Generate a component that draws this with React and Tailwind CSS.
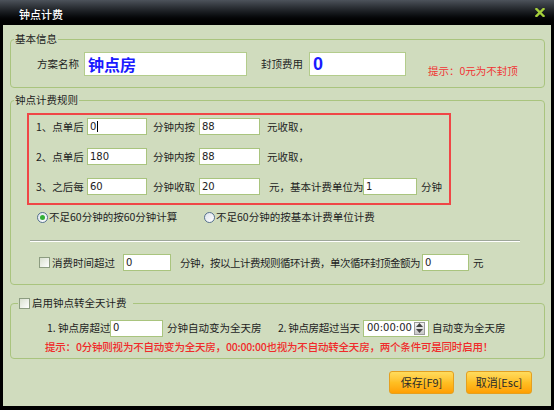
import React from "react";

function Field({ w, value, cursor = false }) {
  return (
    <div
      className={`${w} h-[17px] shrink-0 bg-white border border-[#a9c47e] flex items-center pl-[2px] text-[10px] text-[#222] font-['DejaVu_Sans',sans-serif]`}
    >
      {value}
      {cursor && <span className="ml-[1px] w-px h-[11px] bg-black" />}
    </div>
  );
}

function Check() {
  return (
    <span className="w-[11px] h-[11px] shrink-0 border border-[#8c9c80] bg-linear-to-br from-[#d8e0cf] to-white" />
  );
}

function Radio({ checked }) {
  return (
    <span className="w-[11px] h-[11px] shrink-0 rounded-full border border-[#56718f] bg-linear-to-br from-[#dde4ec] to-white flex items-center justify-center">
      {checked && <span className="w-[5px] h-[5px] rounded-full bg-[#33b036]" />}
    </span>
  );
}

function Button({ w, children }) {
  return (
    <button
      className={`${w} h-[23px] rounded-[3px] border border-[#e4a020] bg-linear-to-b from-[#ffdc5c] via-[#ffbf22] to-[#ff9f00] text-[11px] text-[#2a2a2a] flex items-center justify-center`}
    >
      {children}
    </button>
  );
}

export default function App() {
  return (
    <div className="w-[554px] h-[410px] bg-black flex flex-col font-['Noto_Sans_CJK_SC',sans-serif] text-[10.5px] leading-[14px] text-[#1e1e1e]">
      {/* title bar */}
      <div className="h-[25px] shrink-0 bg-linear-to-b from-[#4d535b] via-[#171a1e] to-black flex items-center justify-between pl-[19px] pr-[9px] pt-[3px]">
        <span className="text-white text-[11px] font-medium">钟点计费</span>
        <svg width="10" height="9" viewBox="0 0 10 9" className="mt-[-3px]">
          <path d="M1.5 1 L8.5 8 M8.5 1 L1.5 8" stroke="#a6d03c" strokeWidth="2.4" strokeLinecap="square" />
        </svg>
      </div>

      <div className="mx-[3px] mb-[4px] flex-1 bg-[#d0dcbe] pl-[7px] pr-[6px] pt-[7px] flex flex-col">
        {/* 基本信息 */}
        <fieldset className="border border-[#a9c47e] rounded-[4px]">
          <legend className="ml-[3px] px-[1px] leading-[14px]">基本信息</legend>
          <div className="flex items-end pl-[26px] pt-[6px] pb-[11px]">
            <div className="flex items-center h-[24px]">
              <span className="w-[47px]">方案名称</span>
              <div className="w-[163px] h-[24px] bg-white border border-[#b3cc8c] flex items-center pl-[3px] text-[16px] font-bold text-[#1a1aff]">
                钟点房
              </div>
              <span className="w-[62px] pl-[14px]">封顶费用</span>
              <div className="w-[97px] h-[24px] bg-white border border-[#b3cc8c] flex items-center pl-[3px] text-[18px] font-bold text-[#1a1aff] font-['Liberation_Sans',sans-serif]">
                0
              </div>
            </div>
            <span className="ml-[22px] mb-[-2px] text-[#f03434]">提示：0元为不封顶</span>
          </div>
        </fieldset>

        {/* 钟点计费规则 */}
        <fieldset className="mt-[5px] border border-[#a9c47e] rounded-[4px] pb-[13px]">
          <legend className="ml-[3px] px-[1px] leading-[14px]">钟点计费规则</legend>
          <div className="ml-[16px] mt-[6px] w-[424px] border-2 border-[#f04646] pt-[3px] pb-[8px] flex flex-col gap-[13px]">
            <div className="flex items-center h-[17px] pl-[7px]">
              <span className="w-[51px]">1、点单后</span>
              <Field w="w-[60px]" value="0" cursor />
              <span className="w-[52px] pl-[6px]">分钟内按</span>
              <Field w="w-[61px]" value="88" />
              <span className="pl-[7px]">元收取，</span>
            </div>
            <div className="flex items-center h-[17px] pl-[7px]">
              <span className="w-[51px]">2、点单后</span>
              <Field w="w-[60px]" value="180" />
              <span className="w-[52px] pl-[6px]">分钟内按</span>
              <Field w="w-[61px]" value="88" />
              <span className="pl-[7px]">元收取，</span>
            </div>
            <div className="flex items-center h-[17px] pl-[7px]">
              <span className="w-[51px]">3、之后每</span>
              <Field w="w-[60px]" value="60" />
              <span className="w-[52px] pl-[6px]">分钟收取</span>
              <Field w="w-[61px]" value="20" />
              <span className="w-[103px] pl-[9px] whitespace-nowrap">元，基本计费单位为</span>
              <Field w="w-[54px]" value="1" />
              <span className="pl-[4px]">分钟</span>
            </div>
          </div>

          <div className="flex items-center h-[14px] mt-[5px] pl-[26px]">
            <Radio checked />
            <span className="w-[156px] pl-[1px] whitespace-nowrap">不足60分钟的按60分钟计算</span>
            <Radio />
            <span className="pl-[1px] whitespace-nowrap">不足60分钟的按基本计费单位计费</span>
          </div>

          <div className="ml-[19px] mt-[16px] w-[490px] h-[2px] border-t border-t-[#9ea79a] border-b border-b-white" />

          <div className="flex items-center h-[17px] mt-[12px] pl-[28px]">
            <Check />
            <span className="w-[73px] pl-[2px] whitespace-nowrap">消费时间超过</span>
            <Field w="w-[48px]" value="0" />
            <span className="pl-[9px] pr-[2px] whitespace-nowrap tracking-[-0.5px]">分钟，按以上计费规则循环计费，单次循环封顶金额为</span>
            <Field w="w-[47px]" value="0" />
            <span className="pl-[4px]">元</span>
          </div>
        </fieldset>

        {/* 启用钟点转全天计费 */}
        <fieldset className="mt-[11px] border border-[#a9c47e] rounded-[4px] pb-[4px]">
          <legend className="ml-[7px] pl-[1px] pr-[6px] leading-[14px]">
            <span className="inline-flex items-center">
              <Check />
              <span className="pl-[2px]">启用钟点转全天计费</span>
            </span>
          </legend>
          <div className="flex items-center h-[17px] mt-[8px] pl-[36px]">
            <span className="w-[63px] whitespace-nowrap">1. 钟点房超过</span>
            <Field w="w-[53px]" value="0" />
            <span className="w-[115px] pl-[4px] whitespace-nowrap">分钟自动变为全天房</span>
            <span className="w-[85px] whitespace-nowrap tracking-[-0.3px]">2. 钟点房超过当天</span>
            <div className="w-[66px] h-[17px] shrink-0 bg-white border border-[#a9c47e] flex items-center justify-between pl-[3px] pr-[3px] text-[10px] text-[#222] font-['DejaVu_Sans',sans-serif]">
              <span>00:00:00</span>
              <span className="w-[11px] h-[13px] border border-[#9a9a9a] bg-linear-to-b from-[#f2f2f2] to-[#c8c8c8] flex flex-col items-center justify-center gap-[2px]">
                <svg width="7" height="4" viewBox="0 0 7 4"><path d="M0 4 L3.5 0 L7 4 Z" fill="#444" /></svg>
                <svg width="7" height="4" viewBox="0 0 7 4"><path d="M0 0 L3.5 4 L7 0 Z" fill="#444" /></svg>
              </span>
            </div>
            <span className="pl-[3px] whitespace-nowrap">自动变为全天房</span>
          </div>
          <div className="mt-[3px] pl-[34px] leading-[14px] text-[#f02a2a] font-medium whitespace-nowrap tracking-[-0.2px]">
            提示：0分钟则视为不自动变为全天房，00:00:00也视为不自动转全天房，两个条件可是同时启用！
          </div>
        </fieldset>

        <div className="flex justify-end gap-[12px] mt-[12px] pr-[13px]">
          <Button w="w-[65px]">保存[F9]</Button>
          <Button w="w-[66px]">取消[Esc]</Button>
        </div>
      </div>
    </div>
  );
}
